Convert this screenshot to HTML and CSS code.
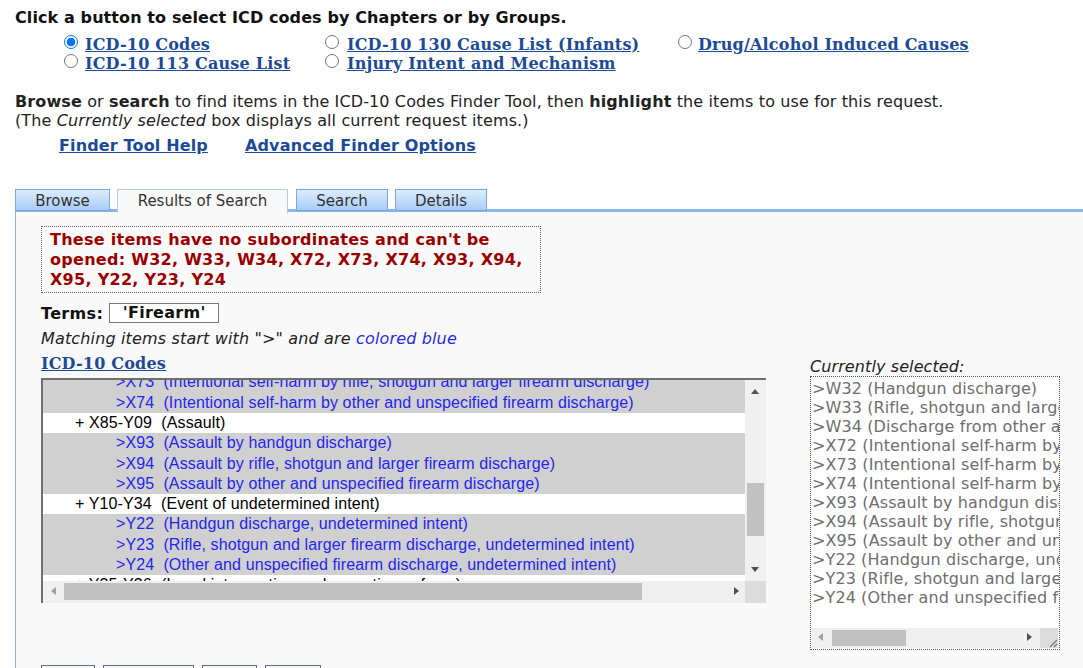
FILE: index.html
```html
<!DOCTYPE html>
<html>
<head>
<meta charset="utf-8">
<link rel="stylesheet" href="styles.css">
</head>
<body>
<div class="page">
  <div class="heading">Click a button to select ICD codes by Chapters or by Groups.</div>
  <div class="radios">
    <div class="ropt"><span class="radio checked"></span><a class="slink" href="#">ICD-10 Codes</a></div>
    <div class="ropt"><span class="radio"></span><a class="slink" href="#">ICD-10 130 Cause List (Infants)</a></div>
    <div class="ropt"><span class="radio"></span><a class="slink" href="#">Drug/Alcohol Induced Causes</a></div>
    <div class="ropt"><span class="radio"></span><a class="slink" href="#">ICD-10 113 Cause List</a></div>
    <div class="ropt"><span class="radio"></span><a class="slink" href="#">Injury Intent and Mechanism</a></div>
  </div>
  <div class="intro"><b>Browse</b> or <b>search</b> to find items in the ICD-10 Codes Finder Tool, then <b>highlight</b> the items to use for this request.<br>(The <i>Currently selected</i> box displays all current request items.)</div>
  <div class="helplinks"><a class="blink" href="#">Finder Tool Help</a><a class="blink" href="#">Advanced Finder Options</a></div>
</div>

<div class="tabs">
  <div class="tab">Browse</div>
  <div class="tab active">Results of Search</div>
  <div class="tab">Search</div>
  <div class="tab">Details</div>
</div>
<div class="panel">
  <div class="notice">These items have no subordinates and can't be opened: W32, W33, W34, X72, X73, X74, X93, X94, X95, Y22, Y23, Y24</div>
  <div class="terms"><b>Terms:</b><span class="termbox">'Firearm'</span></div>
  <div class="matching">Matching items start with "&gt;" and are <span class="blue">colored blue</span></div>
  <div class="finder">
    <div class="leftcol">
      <a class="slink codes" href="#">ICD-10 Codes</a>
      <div class="listbox">
        <div class="listview">
          <div class="rows">
            <div class="row match">&gt;X73  (Intentional self-harm by rifle, shotgun and larger firearm discharge)</div>
            <div class="row match">&gt;X74  (Intentional self-harm by other and unspecified firearm discharge)</div>
            <div class="row parent">+ X85-Y09  (Assault)</div>
            <div class="row match">&gt;X93  (Assault by handgun discharge)</div>
            <div class="row match">&gt;X94  (Assault by rifle, shotgun and larger firearm discharge)</div>
            <div class="row match">&gt;X95  (Assault by other and unspecified firearm discharge)</div>
            <div class="row parent">+ Y10-Y34  (Event of undetermined intent)</div>
            <div class="row match">&gt;Y22  (Handgun discharge, undetermined intent)</div>
            <div class="row match">&gt;Y23  (Rifle, shotgun and larger firearm discharge, undetermined intent)</div>
            <div class="row match">&gt;Y24  (Other and unspecified firearm discharge, undetermined intent)</div>
            <div class="row parent">+ Y35-Y36  (Legal intervention and operations of war)</div>
          </div>
          <div class="vscroll">
            <span class="arr up"></span>
            <span class="vthumb"></span>
            <span class="arr down"></span>
          </div>
        </div>
        <div class="hscroll">
          <div class="htrack"><span class="arr left"></span><span class="hthumb"></span><span class="arr right"></span></div>
          <div class="corner"></div>
        </div>
      </div>
    </div>
    <div class="rightcol">
      <div class="curlabel">Currently selected:</div>
      <div class="curbox">
        <div class="curlines">&gt;W32 (Handgun discharge)
&gt;W33 (Rifle, shotgun and larger firearm discharge)
&gt;W34 (Discharge from other and unspecified firearms)
&gt;X72 (Intentional self-harm by handgun discharge)
&gt;X73 (Intentional self-harm by rifle, shotgun and larger firearm discharge)
&gt;X74 (Intentional self-harm by other and unspecified firearm discharge)
&gt;X93 (Assault by handgun discharge)
&gt;X94 (Assault by rifle, shotgun and larger firearm discharge)
&gt;X95 (Assault by other and unspecified firearm discharge)
&gt;Y22 (Handgun discharge, undetermined intent)
&gt;Y23 (Rifle, shotgun and larger firearm discharge, undetermined intent)
&gt;Y24 (Other and unspecified firearm discharge, undetermined intent)</div>
        <div class="curscroll">
          <div class="htrack"><span class="arr left"></span><span class="cthumb"></span><span class="arr right"></span></div>
          <div class="grip">
            <svg width="12" height="12" viewBox="0 0 12 12"><path d="M4 11 L11 4 M8 11 L11 8" stroke="#777" stroke-width="1.2" fill="none"/></svg>
          </div>
        </div>
      </div>
    </div>
  </div>
  <div class="buttons">
    <span class="btn w54"></span><span class="btn w90"></span><span class="btn w55"></span><span class="btn w56"></span>
  </div>
</div>
</body>
</html>
```

FILE: styles.css
```css
html, body {
  margin: 0;
  padding: 0;
  background: #ffffff;
  overflow: hidden;
}
body {
  font-family: "DejaVu Sans", Verdana, sans-serif;
  color: #222222;
  font-size: 16px;
  letter-spacing: 0.1px;
}
.page {
  padding: 8px 0 0 15px;
}
.heading {
  font-weight: bold;
  line-height: 20px;
  color: #111;
}
.radios {
  display: grid;
  grid-template-columns: 261px 353px auto;
  margin: 7px 0 0 49px;
  line-height: 19px;
}
.ropt {
  display: flex;
  align-items: center;
  height: 19px;
}
.radio {
  box-sizing: border-box;
  width: 14px;
  height: 14px;
  border: 1px solid #767676;
  border-radius: 50%;
  background: #fff;
  margin-right: 7px;
  flex: none;
  position: relative;
  top: -3px;
}
.radio.checked {
  border: 1px solid #0075ff;
  background: radial-gradient(circle, #0075ff 0 4px, #fff 4.6px);
}
.ropt:nth-child(2) .radio, .ropt:nth-child(5) .radio { margin-right: 8px; }
.ropt:nth-child(3) .radio { margin-right: 6px; }
.slink {
  font-family: "DejaVu Serif", Georgia, serif;
  font-weight: bold;
  color: #1c4a96;
  text-decoration: underline;
  font-size: 16px;
  letter-spacing: 0.2px;
}
.intro {
  margin-top: 19px;
  line-height: 19px;
  letter-spacing: 0.12px;
}
.helplinks {
  margin: 6px 0 0 44px;
  line-height: 19px;
  display: flex;
  gap: 37px;
}
.blink {
  font-weight: bold;
  color: #1c4a96;
  text-decoration: underline;
  letter-spacing: 0.15px;
}
.tabs {
  display: flex;
  gap: 7px;
  margin: 34px 0 0 15px;
  height: 20px;
  position: relative;
  z-index: 2;
}
.tab {
  box-sizing: border-box;
  height: 22px;
  border: 1px solid #79a7e3;
  background: linear-gradient(#dcedfd, #a8ccf5);
  font-size: 15px;
  color: #333;
  text-align: center;
  line-height: 22px;
  width: 95px;
  letter-spacing: 0;
}
.tab:nth-child(2) { width: 171px; }
.tab:nth-child(3) { width: 92px; margin-left: 1px; }
.tab:nth-child(4) { width: 92px; }
.tab.active {
  background: #f9f9f9;
  border-color: #b8c8e0;
  border-bottom: none;
  height: 24px;
}
.panel {
  margin-left: 15px;
  border-top: 3px solid #89b4ee;
  border-left: 1px solid #8ab0e6;
  background: #f9f9f9;
  padding: 14px 0 0 25px;
  height: 460px;
}
.notice {
  box-sizing: border-box;
  width: 500px;
  border: 1px dotted #666;
  padding: 3px 8px 2px 8px;
  color: #9b0000;
  font-weight: bold;
  line-height: 20px;
  letter-spacing: 0.28px;
}
.terms {
  margin-top: 10px;
  display: flex;
  align-items: center;
  height: 20px;
}
.terms b { color: #111; letter-spacing: 0.35px; }
.termbox {
  box-sizing: border-box;
  margin-left: 6px;
  width: 110px;
  height: 20px;
  border: 1px solid #777;
  background: #fff;
  font-weight: bold;
  text-align: center;
  line-height: 18px;
  color: #111;
  letter-spacing: 0.3px;
}
.matching {
  margin-top: 6px;
  font-style: italic;
  line-height: 20px;
  letter-spacing: 0.15px;
}
.blue { color: #2a2aee; }
.finder {
  display: flex;
  gap: 44px;
  margin-top: 5px;
}
.leftcol {
  width: 725px;
}
.codes {
  display: block;
  line-height: 20px;
}
.listbox {
  box-sizing: border-box;
  margin-top: 4px;
  width: 725px;
  height: 225px;
  border-top: 2px solid #6f6f6f;
  border-left: 2px solid #6f6f6f;
  background: #f0f0f0;
}
.listview {
  display: flex;
  height: 201px;
}
.rows {
  flex: 1;
  overflow: hidden;
  background: #fff;
}
.row {
  white-space: pre;
  font-family: "Liberation Sans", Arial, sans-serif;
  font-size: 16px;
  height: 20.3px;
  line-height: 20.3px;
  color: #000;
  background: #fff;
  letter-spacing: 0.12px;
  padding-left: 73px;
}
.row.parent { padding-left: 32px; }
.rows .row:first-child { margin-top: -7.6px; }
.row.match {
  background: #d0d0d0;
  color: #2424f2;
}
.vscroll {
  width: 21px;
  background: #f0f0f0;
  position: relative;
}
.vthumb {
  position: absolute;
  left: 2px;
  right: 2px;
  top: 103px;
  height: 53px;
  background: #c1c1c1;
}
.arr {
  position: absolute;
  width: 0;
  height: 0;
}
.arr.up {
  left: 6px; top: 9px;
  border-left: 4.5px solid transparent;
  border-right: 4.5px solid transparent;
  border-bottom: 5px solid #505050;
}
.arr.down {
  left: 6px; bottom: 9px;
  border-left: 4.5px solid transparent;
  border-right: 4.5px solid transparent;
  border-top: 5px solid #505050;
}
.hscroll {
  display: flex;
  height: 22px;
}
.htrack {
  flex: 1;
  position: relative;
  background: #f0f0f0;
}
.corner {
  width: 21px;
  background: #dcdcdc;
}
.arr.left {
  left: 8px; top: 6px;
  border-top: 4.5px solid transparent;
  border-bottom: 4.5px solid transparent;
  border-right: 5px solid #a0a0a0;
}
.arr.right {
  right: 6px; top: 6px;
  border-top: 4.5px solid transparent;
  border-bottom: 4.5px solid transparent;
  border-left: 5px solid #505050;
}
.hthumb {
  position: absolute;
  left: 21px;
  width: 578px;
  top: 2px;
  bottom: 3px;
  background: #c1c1c1;
}
.rightcol {
  width: 250px;
  margin-top: 3px;
}
.curlabel {
  font-style: italic;
  line-height: 19px;
}
.curbox {
  box-sizing: border-box;
  width: 250px;
  height: 274px;
  border: 1px dotted #555;
  background: #fff;
  display: flex;
  flex-direction: column;
}
.curlines {
  flex: 1;
  white-space: pre;
  overflow: hidden;
  color: #6e6e6e;
  line-height: 19px;
  padding: 2px 0 0 1px;
  letter-spacing: 0.1px;
}
.curscroll {
  display: flex;
  height: 20px;
  margin: 0 1px 1px 1px;
}
.curscroll .arr.left { left: 6px; top: 5px; }
.curscroll .arr.right { right: 8px; top: 5px; }
.cthumb {
  position: absolute;
  left: 20px;
  width: 74px;
  top: 2px;
  bottom: 2px;
  background: #c1c1c1;
}
.grip {
  width: 18px;
  background: #dcdcdc;
  display: flex;
  align-items: flex-end;
  justify-content: flex-end;
}
.buttons {
  display: flex;
  gap: 8px;
  margin-top: 15px;
}
.btn {
  box-sizing: border-box;
  height: 24px;
  border: 1px solid #6a6a8e;
  background: #f4f4f4;
}
.w54 { width: 54px; }
.w90 { width: 91px; }
.w55 { width: 55px; }
.w56 { width: 56px; }
```
